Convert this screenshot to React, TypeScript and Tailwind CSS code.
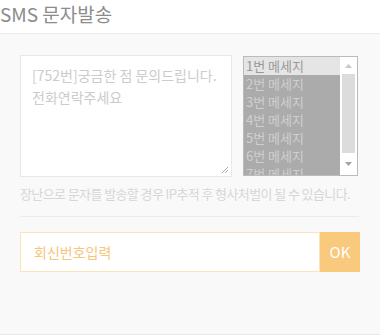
import React from "react";

const font = { fontFamily: '"Noto Sans CJK KR", "Noto Sans", sans-serif' };

export default function App() {
  const items = ["1번 메세지", "2번 메세지", "3번 메세지", "4번 메세지", "5번 메세지", "6번 메세지", "7번 메세지"];
  return (
    <div className="w-[380px] h-[336px] bg-white" style={font}>
      <div className="h-[34px] border-b border-[#ebebeb] flex items-center">
        <h1 className="text-[19px] leading-none text-[#8c8c8c] -mt-[6px]">SMS 문자발송</h1>
      </div>
      <div className="h-[301px] bg-[#f9f9f9] border-b border-[#e8e8e8] px-[20px] pt-[21px]">
        <div className="flex">
          <div className="w-[212px] h-[122px] bg-white border border-[#e8e8e8] px-[11px] pt-[8px] relative">
            <p className="text-[14px] leading-[22px] text-[#cccccc]">[752번]궁금한 점 문의드립니다. 전화연락주세요</p>
            <svg className="absolute right-[2px] bottom-[2px]" width="9" height="9" viewBox="0 0 9 9">
              <path d="M8 2 L2 8 M8 5 L5 8" stroke="#aaa" strokeWidth="1" />
            </svg>
          </div>
          <div className="ml-[11px] mt-[1px] w-[115px] h-[120px] border border-[#bbbbbb] flex overflow-hidden">
            <div className="flex-1 bg-[#ababab] overflow-hidden">
              {items.map((t, i) => (
                <div
                  key={t}
                  className={
                    i === 0
                      ? "h-[18px] leading-[18px] pl-[2px] text-[13px] text-[#999999] bg-[#e5e5e5]"
                      : "h-[18px] leading-[18px] pl-[2px] text-[13px] text-[#cfcfcf]"
                  }
                >
                  {t}
                </div>
              ))}
            </div>
            <div className="w-[17px] bg-white flex flex-col items-center">
              <div className="h-[17px] flex items-center justify-center">
                <svg width="7" height="4" viewBox="0 0 7 4"><path d="M0 4 L3.5 0 L7 4Z" fill="#c8c8c8" /></svg>
              </div>
              <div className="w-[13px] h-[79px] bg-[#dcdcdc]" />
              <div className="flex-1 flex items-center justify-center">
                <svg width="7" height="4" viewBox="0 0 7 4"><path d="M0 0 L3.5 4 L7 0Z" fill="#a3a3a3" /></svg>
              </div>
            </div>
          </div>
        </div>
        <p className="mt-[7px] text-[13px] leading-[20px] text-[#d6d6d6] tracking-[-0.6px] whitespace-nowrap">
          장난으로 문자를 발송할 경우 IP추적 후 형사처벌이 될 수 있습니다.
        </p>
        <div className="mt-[12px] border-t border-[#ebebeb] w-[339px]" />
        <div className="mt-[15px] flex w-[340px] h-[40px]">
          <div className="flex-1 bg-white border border-[#fde4b6] flex items-center pl-[13px]">
            <span className="text-[14px] text-[#f8c57a]">회신번호입력</span>
          </div>
          <button className="w-[40px] bg-[#f9ca7e] text-white text-[15px] flex items-center justify-center">OK</button>
        </div>
      </div>
    </div>
  );
}
